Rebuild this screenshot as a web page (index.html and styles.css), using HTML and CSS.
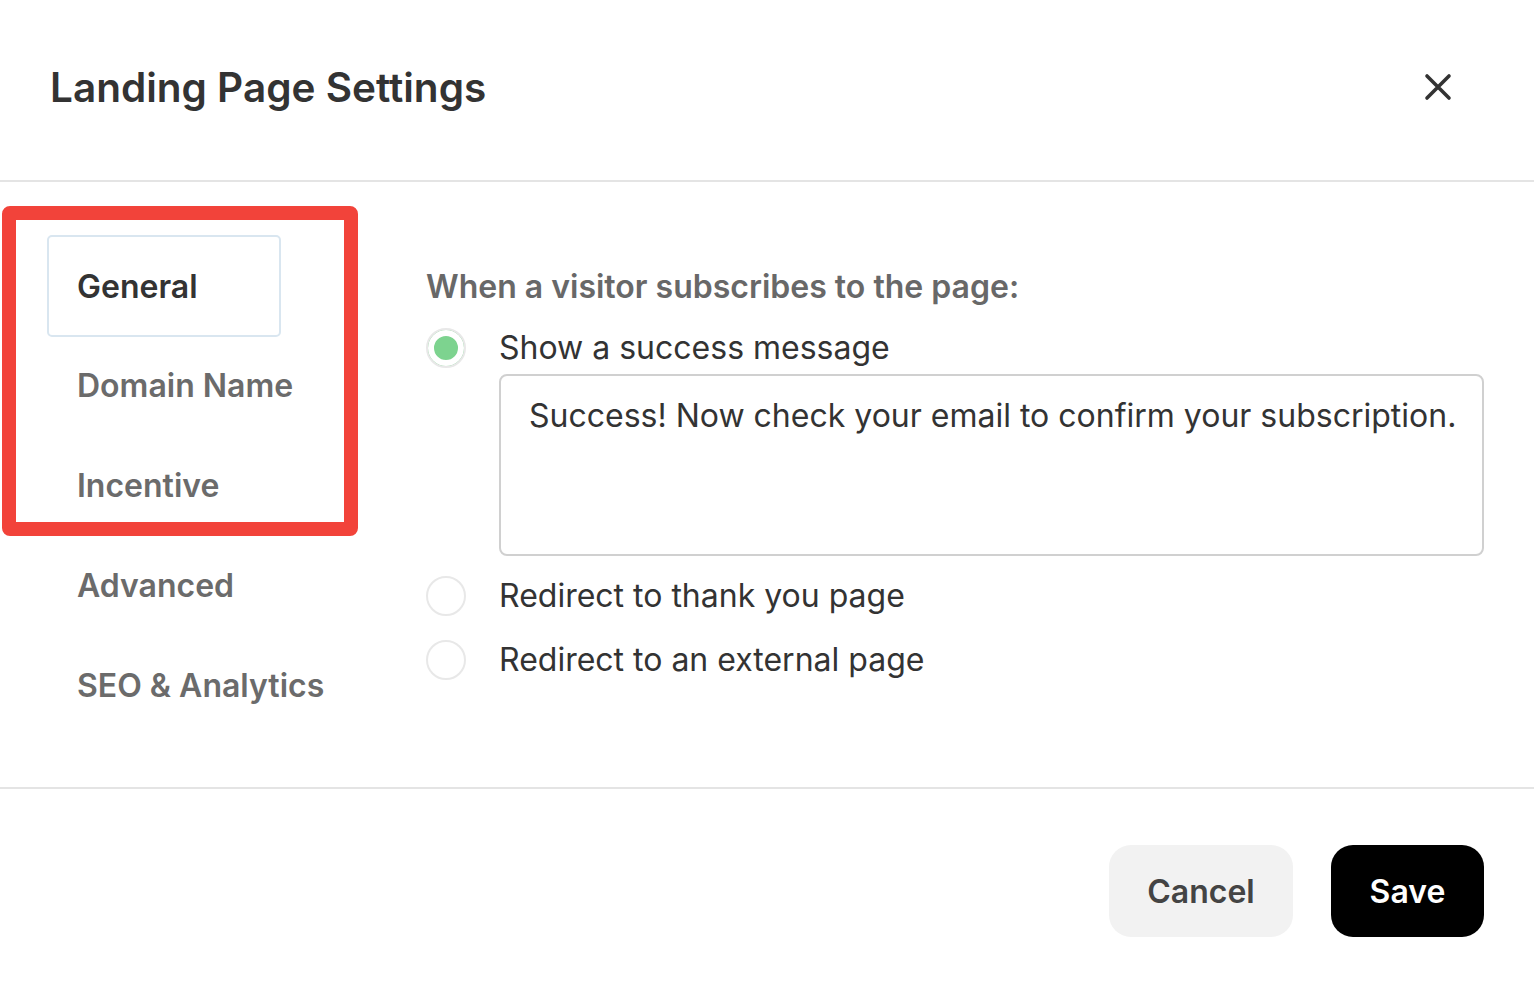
FILE: index.html
```html
<!DOCTYPE html>
<html lang="en">
<head>
    <meta charset="UTF-8">
    <meta name="viewport" content="width=device-width, initial-scale=1.0">
    <title>Landing Page Settings</title>
    <link rel="stylesheet" href="styles.css">
</head>
<body>
    <div class="modal">
        <header class="modal-header">
            <h1>Landing Page Settings</h1>
            <button class="close" aria-label="Close">
                <svg width="28" height="28" viewBox="0 0 28 28">
                    <path d="M3 3 L25 25 M25 3 L3 25" stroke="#333" stroke-width="3.6" stroke-linecap="round"/>
                </svg>
            </button>
        </header>
        <div class="modal-body">
            <nav class="tabs">
                <a class="tab active">General</a>
                <a class="tab">Domain Name</a>
                <a class="tab">Incentive</a>
                <a class="tab">Advanced</a>
                <a class="tab">SEO &amp; Analytics</a>
            </nav>
            <section class="content">
                <h2>When a visitor subscribes to the page:</h2>
                <div class="option">
                    <span class="radio checked"></span>
                    <span class="option-label">Show a success message</span>
                    <div class="message">Success! Now check your email to confirm your subscription.</div>
                </div>
                <div class="option spaced">
                    <span class="radio"></span>
                    <span class="option-label">Redirect to thank you page</span>
                </div>
                <div class="option">
                    <span class="radio"></span>
                    <span class="option-label">Redirect to an external page</span>
                </div>
            </section>
        </div>
        <footer class="modal-footer">
            <button class="btn btn-cancel">Cancel</button>
            <button class="btn btn-save">Save</button>
        </footer>
        <div class="highlight"></div>
    </div>
</body>
</html>
```

FILE: styles.css
```css
* {
    box-sizing: border-box;
    margin: 0;
    padding: 0;
}

:root {
    --text-dark: #333;
    --text-muted: #6b6b6b;
    --line: #e4e4e4;
    --green: #7dd38f;
}

body {
    background: white;
    font-family: Inter, "Noto Sans", sans-serif;
    color: var(--text-dark);
}

.modal {
    position: relative;
    width: 1534px;
    height: 986px;
}

.modal-header {
    height: 182px;
    border-bottom: 2px solid var(--line);
    display: flex;
    align-items: center;
    justify-content: space-between;
    padding: 0 82px 0 50px;
}

.modal-header h1 {
    font-size: 40.5px;
    font-weight: 600;
    margin-top: -6px;
}

.close {
    border: none;
    background: none;
    width: 28px;
    height: 28px;
    margin-top: -6px;
}

.modal-body {
    height: 607px;
    display: flex;
    border-bottom: 2px solid var(--line);
}

.tabs {
    width: 426px;
    flex-shrink: 0;
    padding: 53px 0 0 47px;
    display: flex;
    flex-direction: column;
}

.tab {
    height: 100px;
    width: 234px;
    display: flex;
    align-items: center;
    padding-left: 28px;
    border: 2px solid transparent;
    border-radius: 5px;
    font-size: 32px;
    font-weight: 600;
    color: var(--text-muted);
    white-space: nowrap;
}

.tab.active {
    height: 102px;
    border-color: #d9e6f0;
    color: var(--text-dark);
}

.tab.active + .tab {
    margin-top: -2px;
}

.content {
    flex: 1;
    padding: 85px 50px 0 0;
}

.content h2 {
    font-size: 32px;
    font-weight: 600;
    color: #686868;
    line-height: 40px;
    margin-bottom: 21px;
}

.option {
    display: grid;
    grid-template-columns: 40px 1fr;
    column-gap: 33px;
    align-items: center;
}

.option + .option {
    margin-top: 24px;
}

.option.spaced {
    margin-top: 20px;
}

.radio {
    width: 40px;
    height: 40px;
    border-radius: 50%;
    border: 2px solid #e8e8e8;
    background: white;
}

.radio.checked {
    background: var(--green);
    box-shadow: inset 0 0 0 6px white;
}

.option-label {
    font-size: 32px;
    line-height: 40px;
    color: var(--text-dark);
    white-space: nowrap;
}

.message {
    grid-column: 2;
    margin-top: 6px;
    height: 182px;
    border: 2px solid #d0d0d0;
    border-radius: 8px;
    padding: 20px 16px 20px 28px;
    font-size: 32px;
    line-height: 40px;
    color: var(--text-dark);
    white-space: nowrap;
}

.modal-footer {
    display: flex;
    justify-content: flex-end;
    gap: 38px;
    padding: 56px 50px 0 0;
}

.btn {
    height: 92px;
    border: none;
    border-radius: 22px;
    font-family: inherit;
    font-size: 32px;
    font-weight: 600;
}

.btn-cancel {
    width: 184px;
    background: #f2f2f2;
    color: #444;
}

.btn-save {
    width: 153px;
    background: black;
    color: white;
}

.highlight {
    position: absolute;
    left: 2px;
    top: 206px;
    width: 356px;
    height: 330px;
    border: 14px solid #f2433a;
    border-radius: 8px;
    pointer-events: none;
}
```
